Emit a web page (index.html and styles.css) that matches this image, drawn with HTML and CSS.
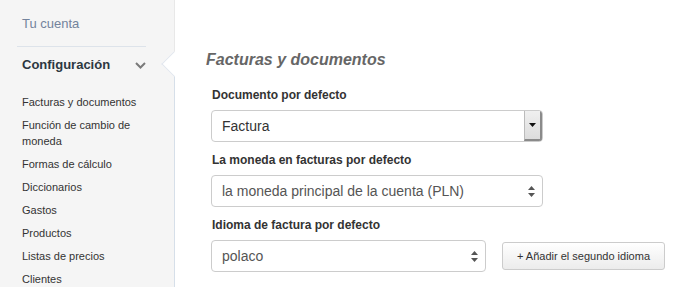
FILE: index.html
```html
<!DOCTYPE html>
<html lang="es">
<head>
    <meta charset="UTF-8">
    <title>Configuración - Facturas y documentos</title>
    <link rel="stylesheet" href="styles.css">
</head>
<body>
    <div class="layout">
        <aside class="sidebar">
            <div class="nav-top">
                <a class="nav-link" href="#">Tu cuenta</a>
            </div>
            <div class="nav-section active">
                <span>Configuración</span>
                <svg class="chevron" width="11" height="7" viewBox="0 0 11 7">
                    <path d="M1 1 L5.5 5.5 L10 1" fill="none" stroke="#7a7a7a" stroke-width="2"/>
                </svg>
            </div>
            <ul class="subnav">
                <li>Facturas y documentos</li>
                <li>Función de cambio de moneda</li>
                <li>Formas de cálculo</li>
                <li>Diccionarios</li>
                <li>Gastos</li>
                <li>Productos</li>
                <li>Listas de precios</li>
                <li>Clientes</li>
            </ul>
        </aside>

        <main class="content">
            <h2 class="page-title">Facturas y documentos</h2>

            <div class="field">
                <label>Documento por defecto</label>
                <div class="combo">
                    <span class="combo-value">Factura</span>
                    <span class="combo-btn">
                        <svg width="7" height="4" viewBox="0 0 7 4"><path d="M0 0 H7 L3.5 4 Z" fill="#111"/></svg>
                    </span>
                </div>
            </div>

            <div class="field">
                <label>La moneda en facturas por defecto</label>
                <div class="select">
                    <span>la moneda principal de la cuenta (PLN)</span>
                    <svg class="updown" width="7" height="11" viewBox="0 0 7 11"><path d="M3.5 0 L7 4 H0 Z M0 7 H7 L3.5 11 Z" fill="#555"/></svg>
                </div>
            </div>

            <div class="field">
                <label>Idioma de factura por defecto</label>
                <div class="row">
                    <div class="select select-short">
                        <span>polaco</span>
                        <svg class="updown" width="7" height="11" viewBox="0 0 7 11"><path d="M3.5 0 L7 4 H0 Z M0 7 H7 L3.5 11 Z" fill="#555"/></svg>
                    </div>
                    <button class="btn">+ Añadir el segundo idioma</button>
                </div>
            </div>
        </main>
    </div>
</body>
</html>
```

FILE: styles.css
```css
body {
    margin: 0;
    font-family: "Liberation Sans", Arial, sans-serif;
    color: #333;
    background: #fff;
}

.layout {
    display: flex;
    min-height: 287px;
}

.sidebar {
    position: relative;
    width: 175px;
    flex-shrink: 0;
    background: #f5f5f5;
    border-right: 1px solid #e8e8e8;
    box-sizing: border-box;
    padding: 14px 28px 0 17px;
}

/* bluish edge below the notch */
.sidebar::after {
    content: "";
    position: absolute;
    top: 75px;
    bottom: 0;
    right: -1px;
    width: 1px;
    background: #d6dfe9;
}

.nav-top {
    padding: 0 5px 13px;
    border-bottom: 1px solid #dde3ea;
}

.nav-link {
    font-size: 13px;
    line-height: 18px;
    color: #73839c;
    text-decoration: none;
}

.nav-section {
    position: relative;
    display: flex;
    justify-content: space-between;
    align-items: center;
    padding: 9px 0 20px 5px;
    font-size: 13px;
    line-height: 18px;
    font-weight: bold;
    color: #2c3741;
}

.chevron {
    margin-top: 1px;
}

/* notch pointing to the active section */
.nav-section.active::after {
    content: "";
    position: absolute;
    right: -37px;
    top: 8px;
    width: 17px;
    height: 17px;
    background: #fff;
    border-left: 1px solid #e2e7ee;
    border-bottom: 1px solid #e2e7ee;
    transform: rotate(45deg);
    z-index: 1;
}

.subnav {
    list-style: none;
    margin: 0;
    padding: 0 0 0 5px;
}

.subnav li {
    font-size: 11px;
    line-height: 16px;
    margin-bottom: 7px;
    color: #333;
}

.content {
    padding: 50px 0 0 30px;
    flex: 1;
}

.page-title {
    margin: 0 0 17px 1px;
    font-size: 16px;
    line-height: 20px;
    font-style: italic;
    font-weight: bold;
    color: #666;
}

.field {
    padding-left: 6px;
    margin-bottom: 10px;
}

.field label {
    display: block;
    font-size: 12px;
    line-height: 16px;
    font-weight: bold;
    color: #333;
    margin: 0 0 7px 1px;
}

.combo {
    display: flex;
    width: 332px;
    height: 32px;
    box-sizing: border-box;
    border: 1px solid #ccc;
    border-radius: 4px;
    overflow: hidden;
}

.combo-value {
    flex: 1;
    padding-left: 10px;
    font-size: 14px;
    line-height: 30px;
    color: #333;
}

.combo-btn {
    width: 15px;
    display: flex;
    align-items: center;
    justify-content: center;
    background: linear-gradient(#f0f0f0, #dcdcdc);
    border-left: 1px solid #bbb;
    border-right: 2px solid #8a8a8a;
    border-bottom: 2px solid #8a8a8a;
}

.select {
    display: flex;
    align-items: center;
    justify-content: space-between;
    width: 332px;
    height: 32px;
    box-sizing: border-box;
    padding: 0 7px 0 10px;
    border: 1px solid #ccc;
    border-radius: 4px;
    font-size: 14px;
    color: #555;
}

.select-short {
    width: 275px;
}

.row {
    display: flex;
    align-items: center;
    gap: 16px;
}

.btn {
    height: 28px;
    padding: 0 14px;
    margin-top: -1px;
    font-family: "Liberation Sans", Arial, sans-serif;
    font-size: 11px;
    color: #333;
    background: linear-gradient(#fff, #ececec);
    border: 1px solid #ccc;
    border-radius: 3px;
}
```
